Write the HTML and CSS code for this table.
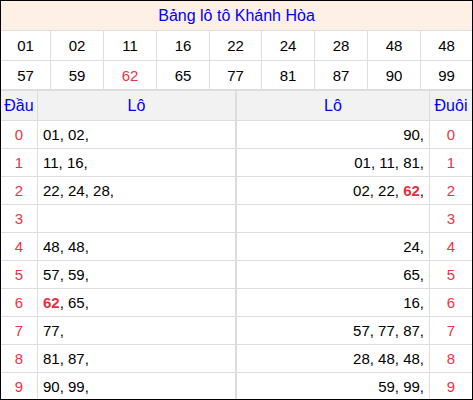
FILE: index.html
```html
<!DOCTYPE html>
<html lang="vi">
<head>
<meta charset="utf-8">
<title>Bảng lô tô Khánh Hòa</title>
<link rel="stylesheet" href="styles.css">
</head>
<body>
<div class="box">
  <div class="title">Bảng lô tô Khánh Hòa</div>
  <div class="nums">
    <div class="n r1">01</div><div class="n r1">02</div><div class="n r1">11</div><div class="n r1">16</div><div class="n r1">22</div><div class="n r1">24</div><div class="n r1">28</div><div class="n r1">48</div><div class="n r1">48</div>
    <div class="n">57</div><div class="n">59</div><div class="n red">62</div><div class="n">65</div><div class="n">77</div><div class="n">81</div><div class="n">87</div><div class="n">90</div><div class="n">99</div>
  </div>
  <div class="lower">
    <div class="h">Đầu</div><div class="h split">Lô</div><div class="h">Lô</div><div class="h">Đuôi</div>

    <div class="d">0</div><div class="l split"><span>01, 02,</span></div><div class="rr"><span>90,</span></div><div class="d">0</div>
    <div class="d">1</div><div class="l split"><span>11, 16,</span></div><div class="rr"><span>01, 11, 81,</span></div><div class="d">1</div>
    <div class="d">2</div><div class="l split"><span>22, 24, 28,</span></div><div class="rr"><span>02, 22, <b>62</b>,</span></div><div class="d">2</div>
    <div class="d">3</div><div class="l split"></div><div class="rr"></div><div class="d">3</div>
    <div class="d">4</div><div class="l split"><span>48, 48,</span></div><div class="rr"><span>24,</span></div><div class="d">4</div>
    <div class="d">5</div><div class="l split"><span>57, 59,</span></div><div class="rr"><span>65,</span></div><div class="d">5</div>
    <div class="d">6</div><div class="l split"><span><b>62</b>, 65,</span></div><div class="rr"><span>16,</span></div><div class="d">6</div>
    <div class="d">7</div><div class="l split"><span>77,</span></div><div class="rr"><span>57, 77, 87,</span></div><div class="d">7</div>
    <div class="d">8</div><div class="l split"><span>81, 87,</span></div><div class="rr"><span>28, 48, 48,</span></div><div class="d">8</div>
    <div class="d">9</div><div class="l split"><span>90, 99,</span></div><div class="rr"><span>59, 99,</span></div><div class="d">9</div>
  </div>
</div>
</body>
</html>
```
FILE: styles.css
```css
html, body {
  margin: 0;
  padding: 0;
  background: #fff;
}
.box {
  width: 471px;
  height: 398px;
  border: 1px solid #000;
  overflow: hidden;
  font-family: "Liberation Sans", Arial, sans-serif;
  color: #000;
}
.title {
  height: 29px;
  line-height: 29px;
  background: #fef0e4;
  color: #0000ff;
  font-size: 16px;
  text-align: center;
  border-bottom: 1px solid #ddd;
}
.nums {
  display: grid;
  grid-template-columns: 49px 52px 52px 52px 51px 52px 52px 52px 51px;
  grid-template-rows: 29px 28px;
  gap: 1px;
  background: #ddd;
  border-bottom: 2px solid #ddd;
}
.n {
  background: #fff;
  display: flex;
  align-items: center;
  justify-content: center;
  font-size: 15px;
}
.n.red {
  color: #ee3344;
}
.lower {
  display: grid;
  grid-template-columns: 36px 198px 192px 42px;
  grid-template-rows: 29px;
  grid-auto-rows: 27px;
  gap: 1px;
  background: #ddd;
}
.lower > div {
  background: #fff;
  display: flex;
  align-items: center;
  font-size: 15px;
}
.lower > .split {
  border-right: 1px solid #ddd;
}
.lower > .h {
  background: #f2f2f2;
  color: #0000ff;
  font-size: 16px;
  justify-content: center;
}
.lower > .d {
  color: #ee3344;
  justify-content: center;
}
.lower > .l {
  padding-left: 5px;
}
.lower > .rr {
  justify-content: flex-end;
  padding-right: 5px;
}
.lower b {
  color: #e3303f;
  font-weight: bold;
}
```
